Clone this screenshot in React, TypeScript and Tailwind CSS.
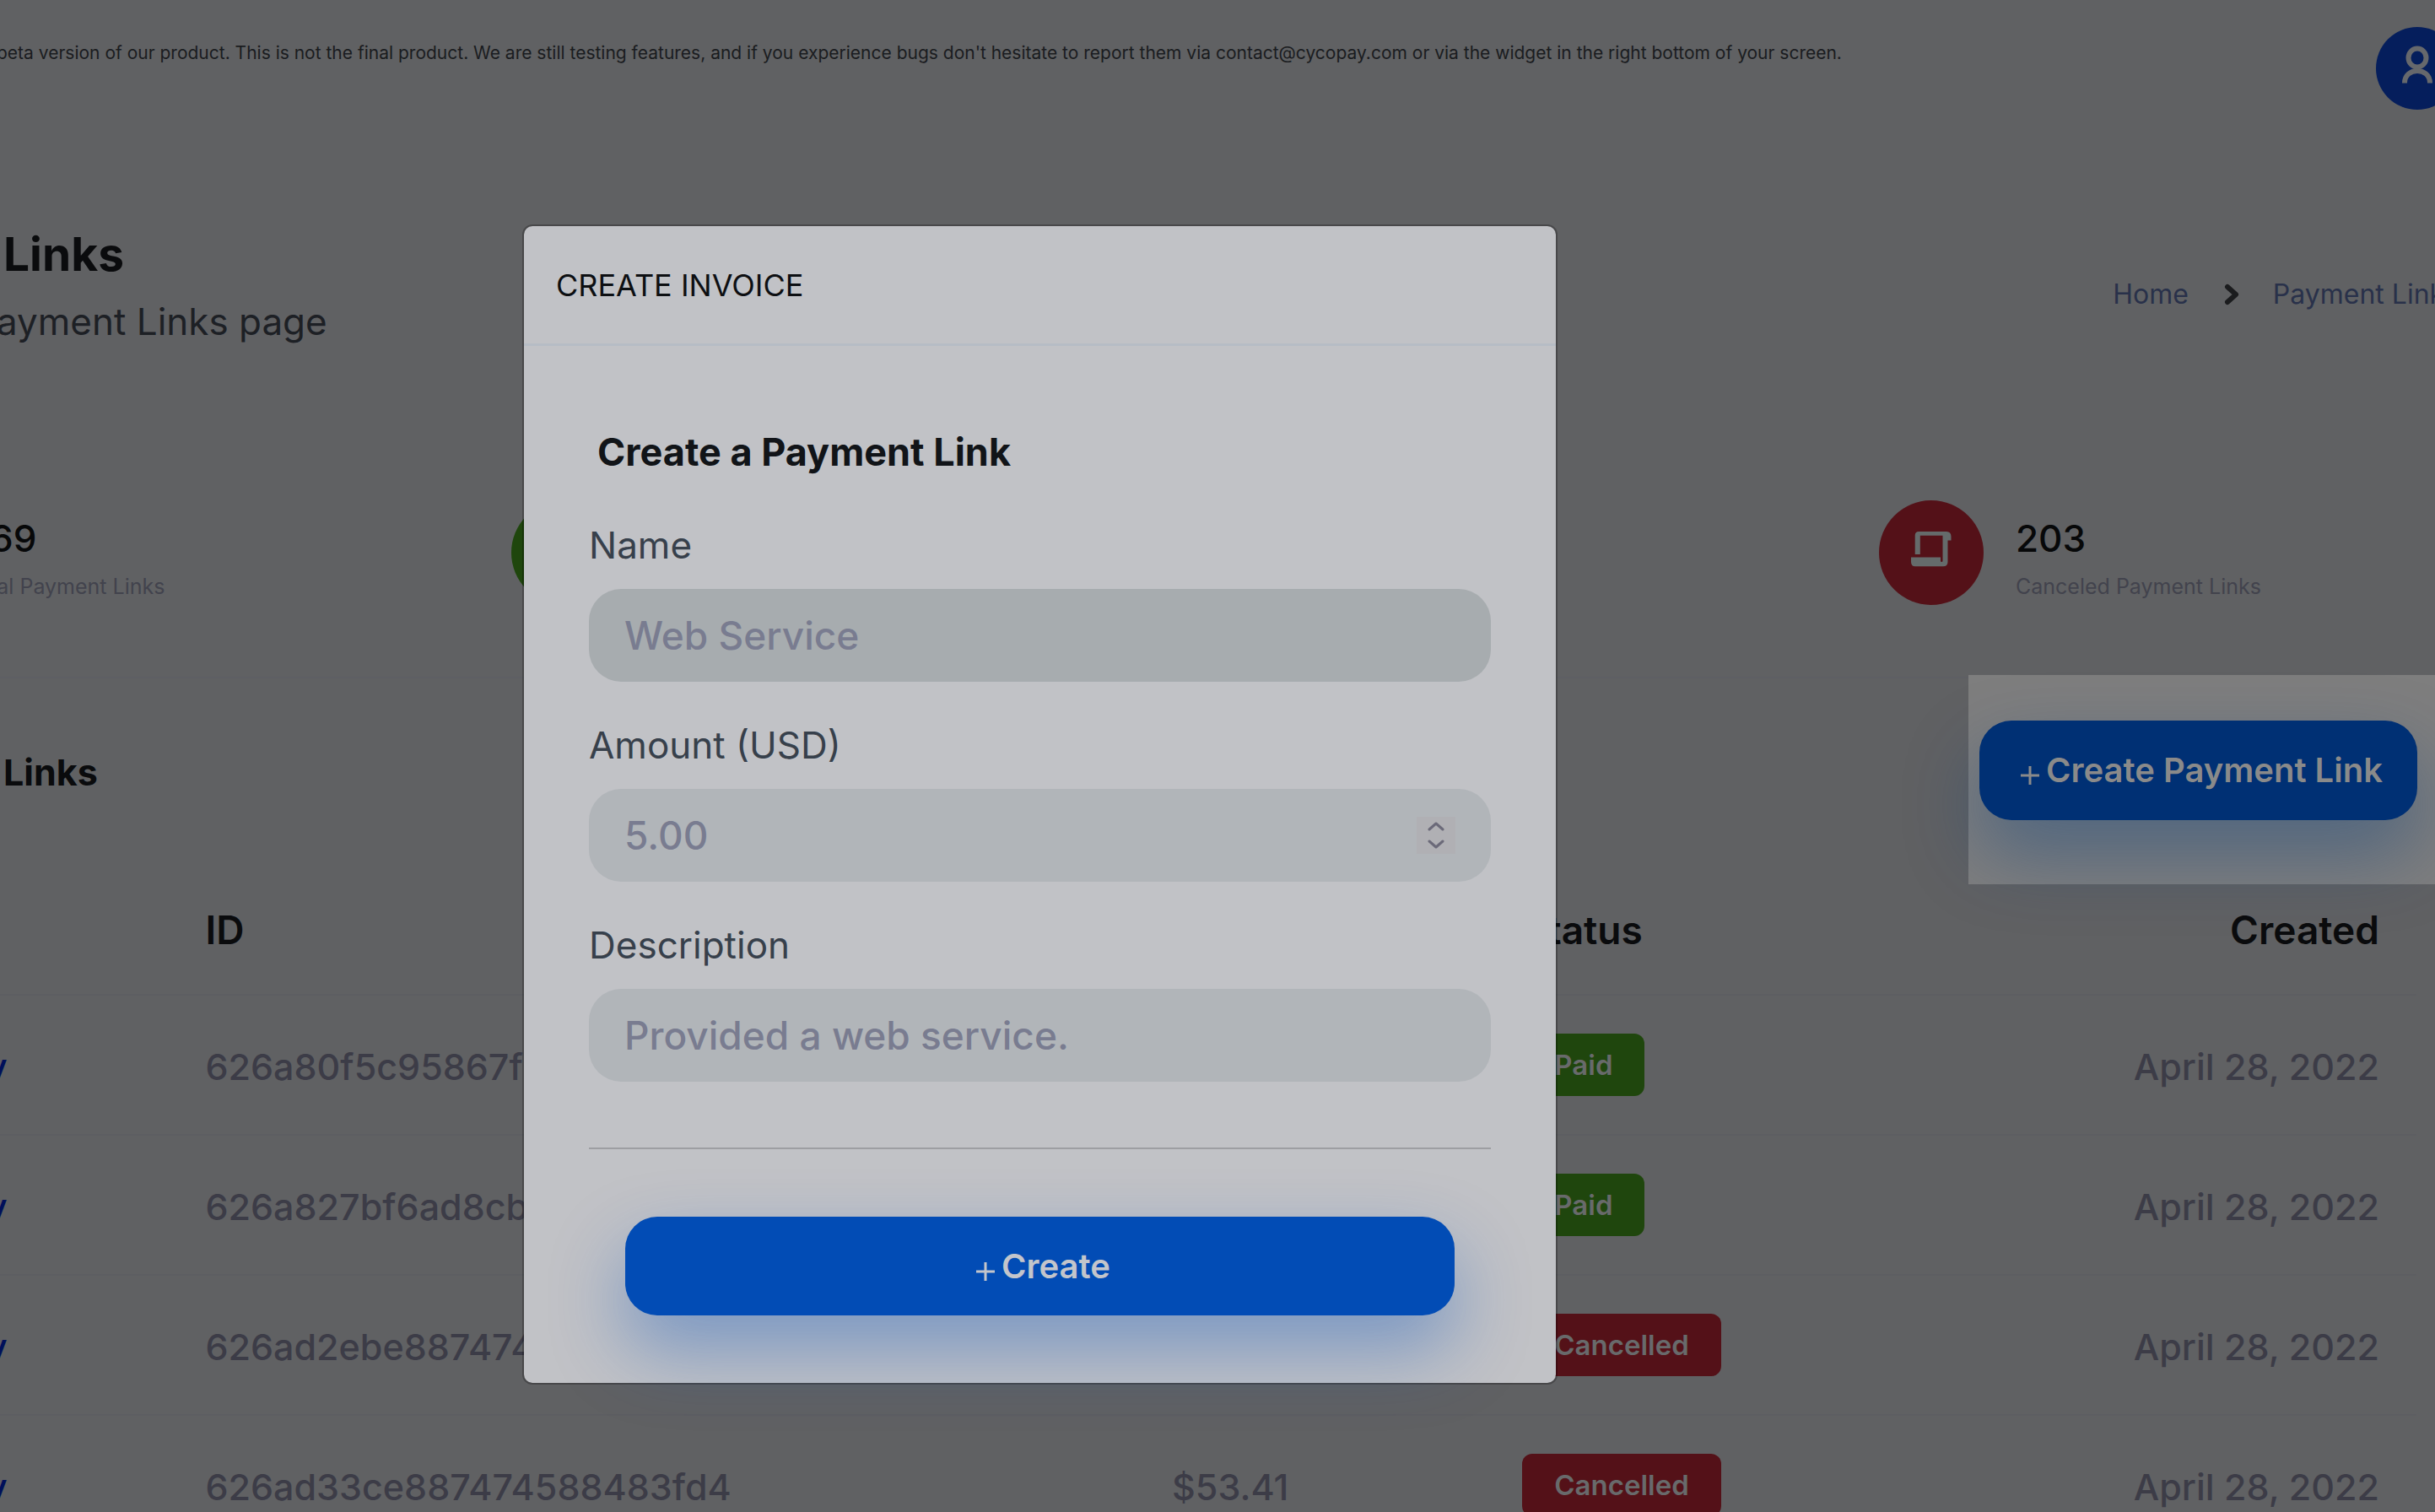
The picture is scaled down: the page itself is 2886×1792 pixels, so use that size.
import type { ReactNode } from "react";

const rows = [
  { id: "626a80f5c95867f6ad8cb1", amount: "$25.00", status: "Paid", created: "April 28, 2022" },
  { id: "626a827bf6ad8cb5c95867", amount: "$25.00", status: "Paid", created: "April 28, 2022" },
  { id: "626ad2ebe887474588483f", amount: "$53.41", status: "Cancelled", created: "April 28, 2022" },
  { id: "626ad33ce887474588483fd4", amount: "$53.41", status: "Cancelled", created: "April 28, 2022" },
];

function ScrollIcon() {
  return (
    <svg viewBox="0 0 48 42" className="mb-2 h-[42px] w-12" fill="#656b6b" aria-hidden="true">
      <path d="M4.7 27V4.5Q4.7 0 9.2 0H42Q47.5 0 47.5 6V10.5H43.5V36Q43.5 41.3 38 41.3H5Q0 41.3 0 36V30.5H35V34.5Q35 36 36.3 36Q37.5 36 37.5 34.5V4.7H10.8V27Z" />
    </svg>
  );
}

function UserIcon() {
  return (
    <svg viewBox="0 0 40 54" className="h-[54px] w-10" fill="none" stroke="#66686c" strokeWidth="6" aria-hidden="true">
      <ellipse cx="20" cy="14.500" rx="10.500" ry="11" />
      <path d="M5 44.500C5 25 35 25 35 44.500" />
    </svg>
  );
}

function StatIcon({ color, children }: { color: string; children: ReactNode }) {
  return <div className={`flex size-[124px] shrink-0 items-center justify-center rounded-full ${color}`}>{children}</div>;
}

function StatText({ value, label }: { value: string; label: string }) {
  return (
    <div className="pt-5">
      <p className="text-[44px] leading-[50px] font-medium text-[#070809]">{value}</p>
      <p className="mt-4 text-[25px] leading-8 whitespace-nowrap text-[#42434d]">{label}</p>
    </div>
  );
}

function Badge({ status }: { status: string }) {
  const color = status === "Paid" ? "bg-[#1f460d]" : "bg-[#541118]";
  return (
    <span className={`inline-flex h-[74px] items-center rounded-xl px-[38px] align-top text-[33px] leading-10 font-semibold text-[#686a6b] ${color}`}>
      {status}
    </span>
  );
}

function Field({ id, label, placeholder, tone, children }: { id: string; label: string; placeholder: string; tone: string; children?: ReactNode }) {
  return (
    <div>
      <label htmlFor={id} className="block text-[44px] leading-14 text-[#37404b]">
        {label}
      </label>
      <div className={`mt-6 flex h-[110px] items-center rounded-[38px] px-[42px] ${tone}`}>
        <input
          id={id}
          placeholder={placeholder}
          className="h-full min-w-0 flex-1 bg-transparent text-[46px] font-medium text-[#37404b] outline-none placeholder:text-[#797c90]"
        />
        {children}
      </div>
    </div>
  );
}

function StepButton({ label, d }: { label: string; d: string }) {
  return (
    <button type="button" aria-label={label} className="flex h-[22px] w-[46px] items-center justify-center bg-[#b0b0b4]">
      <svg viewBox="0 0 20 12" className="h-3 w-5" fill="none" stroke="#6b6a79" strokeWidth="3" strokeLinecap="round" strokeLinejoin="round">
        <path d={d} />
      </svg>
    </button>
  );
}

function Plus() {
  return (
    <svg viewBox="0 0 22 22" className="mt-3 size-[22px]" stroke="currentColor" strokeWidth="3" aria-hidden="true">
      <path d="M11 0V22M0 11H22" />
    </svg>
  );
}

export default function App() {
  return (
    <div className="relative h-screen overflow-hidden bg-[#606163] font-['Inter',sans-serif]">
      <header className="flex items-start justify-between pt-8">
        <p className="-ml-1 pt-2.5 text-[21px] leading-[42px] whitespace-nowrap text-[#1a1c20]">
          beta version of our product. This is not the final product. We are still testing features, and if you experience bugs don't hesitate to report them via contact@cycopay.com or via the widget in the right bottom of your screen.
        </p>
        <button type="button" aria-label="Account" className="-mr-7 flex size-[98px] shrink-0 items-center justify-center rounded-full bg-[#051e5c]">
          <UserIcon />
        </button>
      </header>

      <section className="mt-[139px] flex items-end justify-between">
        <div>
          <h1 className="pl-1 text-[55px] leading-16 font-bold text-[#0a0b0d]">Links</h1>
          <p className="-ml-1 mt-5 text-[44px] leading-14 text-[#1d2025]">ayment Links page</p>
        </div>
        <nav aria-label="Breadcrumb" className="-mr-7 flex h-[120px] items-center text-[32px] text-[#29314a]">
          <a href="#home">Home</a>
          <svg viewBox="0 0 18 26" className="mr-10 ml-[42px] h-[26px] w-[18px]" fill="none" stroke="#1b1c1e" strokeWidth="6" strokeLinecap="round" strokeLinejoin="round" aria-hidden="true">
            <path d="M4 4L14 13L4 22" />
          </svg>
          <a href="#payment-links">Payment Links</a>
        </nav>
      </section>

      <section className="mt-46 grid grid-cols-[606fr_1621fr_659fr] pb-[85px]">
        <div className="-ml-3">
          <StatText value="69" label="tal Payment Links" />
        </div>
        <StatIcon color="bg-[#1f460d]">
          <ScrollIcon />
        </StatIcon>
        <div className="flex items-start gap-[38px]">
          <StatIcon color="bg-[#541118]">
            <ScrollIcon />
          </StatIcon>
          <StatText value="203" label="Canceled Payment Links" />
        </div>
      </section>

      <section className="border-t-2 border-[#5e5f64]">
        <div className="flex items-start justify-between">
          <h2 className="pt-[81px] pl-1 text-[43px] leading-[60px] font-bold text-[#0a0b0d]">Links</h2>
          <div className="-mt-1 h-[248px] bg-[#7e7e7e] pt-[54px] pr-[21px] pl-[13px]">
            <button
              type="button"
              className="flex h-[118px] w-[519px] items-center justify-center gap-2 rounded-[38px] bg-[#003074] pl-2 text-[40px] font-semibold text-[#8a8a8a] shadow-[0_40px_88px_rgba(0,60,130,0.38)]"
            >
              <Plus />
              Create Payment Link
            </button>
          </div>
        </div>

        <table className="w-[calc(100%-22px)] table-fixed border-collapse text-left whitespace-nowrap">
          <colgroup>
            <col className="w-[8.5%]" />
            <col className="w-[40%]" />
            <col className="w-[14.5%]" />
            <col />
            <col className="w-[18%]" />
          </colgroup>
          <thead>
            <tr className="border-b-2 border-[#5d5e62] text-[46px] leading-14 text-[#0a0b0d]">
              <th className="p-0" aria-label="Action" />
              <th className="pt-[26px] pb-12 font-semibold">ID</th>
              <th className="pt-[26px] pb-12 font-semibold">Amount</th>
              <th className="pt-[26px] pb-12 font-semibold">Status</th>
              <th className="pt-[26px] pr-11 pb-12 text-right font-semibold">Created</th>
            </tr>
          </thead>
          <tbody>
            {rows.map((r) => (
              <tr key={r.id} className="border-b-2 border-[#5d5e62] text-[43px] leading-14 font-medium text-[#3c3c47]">
                <td className="pt-14 pb-[52px]">
                  <a href={`#${r.id}`} className="-ml-4 text-[#00105a]">y</a>
                </td>
                <td className="pt-14 pb-[52px]">{r.id}</td>
                <td className="pt-14 pb-[52px]">{r.amount}</td>
                <td className="py-[45px]">
                  <Badge status={r.status} />
                </td>
                <td className="pt-14 pr-11 pb-[52px] text-right">{r.created}</td>
              </tr>
            ))}
          </tbody>
        </table>
      </section>

      <div className="absolute inset-0 flex items-start justify-center pt-[266px] pr-[421px]">
        <div role="dialog" aria-label="Create invoice" className="w-[1227px] rounded-xl border-2 border-black/25 bg-[#c1c2c6] bg-clip-padding">
          <div className="border-b-[3px] border-[#b6bcc5] px-[38px] pt-[46px] pb-[45px]">
            <h2 className="text-[36px] leading-12 text-[#0d0f12]">CREATE INVOICE</h2>
          </div>
          <form className="px-[77px] pt-[98px] pb-20">
            <h3 className="pl-2.5 text-[45px] leading-14 font-bold text-[#111418]">Create a Payment Link</h3>
            <div className="mt-[54px] flex flex-col gap-[47px]">
              <Field id="name" label="Name" placeholder="Web Service" tone="bg-[#a7acaf]" />
              <Field id="amount" label="Amount (USD)" placeholder="5.00" tone="bg-[#b1b5b9]">
                <div className="flex flex-col">
                  <StepButton label="Increase" d="M2 10L10 3L18 10" />
                  <StepButton label="Decrease" d="M2 2L10 9L18 2" />
                </div>
              </Field>
              <Field id="description" label="Description" placeholder="Provided a web service." tone="bg-[#b1b5b9]" />
            </div>
            <hr className="mt-[78px] border-t-2 border-[#9d9ea2]" />
            <div className="px-[43px] pt-20">
              <button
                type="button"
                className="flex h-[117px] w-full items-center justify-center gap-2 rounded-[38px] bg-[#024cb5] pl-2 text-[40px] font-semibold text-[#c3c5cb] shadow-[0_40px_88px_rgba(0,80,190,0.38)]"
              >
                <Plus />
                Create
              </button>
            </div>
          </form>
        </div>
      </div>
    </div>
  );
}
